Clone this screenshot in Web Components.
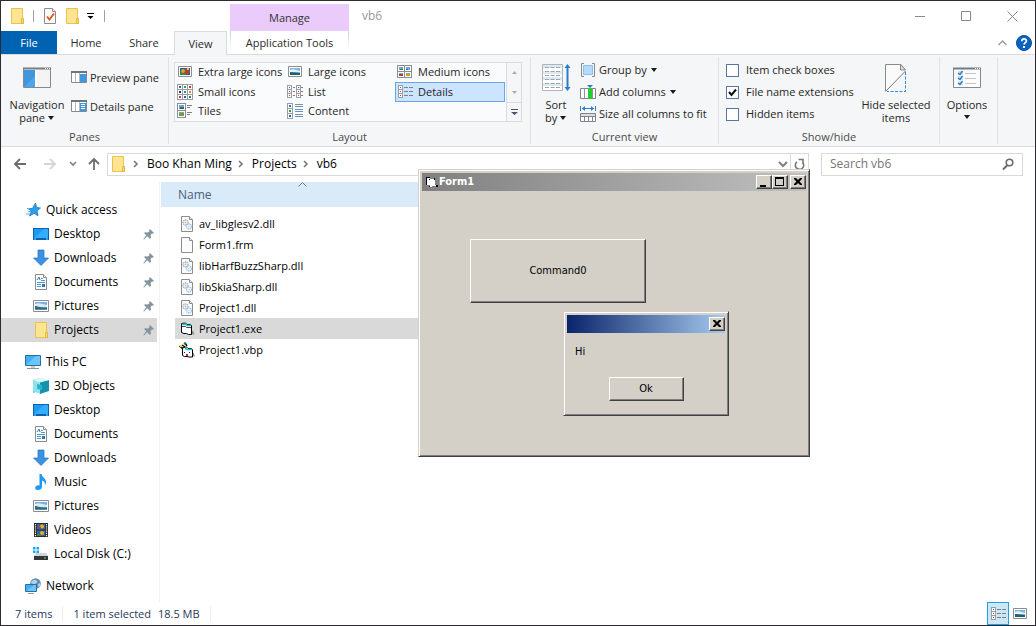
<!DOCTYPE html>
<html lang="en">
<head>
<meta charset="utf-8">
<title>vb6</title>
<style>
  html, body { margin: 0; }
  body { font: 12px/16px "Open Sans", "Noto Sans", sans-serif; color: #000; background: #fff; }
</style>
</head>
<body>
<explorer-window></explorer-window>
<classic-window class="form"></classic-window>

<script>
/* ---------- helpers ---------- */
const RESET = `
  *, *::before, *::after { box-sizing: border-box; }
  button, input { font: inherit; color: inherit; margin: 0; padding: 0; border: 0; background: none; border-radius: 0; }
  a { color: inherit; text-decoration: none; }
  ul, ol { margin: 0; padding: 0; list-style: none; }
`;
function component(name, markup, setup) {
  const template = document.createElement('template');
  template.innerHTML = markup;
  customElements.define(name, class extends HTMLElement {
    connectedCallback() {
      if (this.shadowRoot) return;
      const root = this.attachShadow({ mode: 'open' });
      const copy = template.content.cloneNode(true);
      if (setup) setup(this, copy);
      const style = document.createElement('style');
      style.textContent = RESET;
      root.append(style, copy);
    }
  });
}

/* ---------- icons: [width, height, svg body] ---------- */
const picture = (x, y, w, h) => `<rect x="${x}" y="${y}" width="${w}" height="${h}" fill="#8a8d91"/><rect x="${x+1}" y="${y+1}" width="${w-2}" height="${h-2}" fill="#fff"/><rect x="${x+2}" y="${y+2}" width="${w-4}" height="${h-4}" fill="#6fa6d8"/>`;
const folder = `<path d="M2.5.5h11v10l1 1v4h-12z" fill="#ffe591" stroke="#e9c24f"/><path d="M12.5 15.5v-5h2v5z" fill="#ffdf7c" stroke="#e3b63b"/>`;
const sheet = `<path d="M2.5.5h8l3 3v12h-11z" fill="#fbfbfb" stroke="#8c8c8c"/><path d="M10.5.5v3h3" fill="#eee" stroke="#8c8c8c"/>`;
const desktop = `<rect y="2" width="16" height="12" fill="#0b63ad"/><rect x="1" y="3" width="14" height="9" fill="#1c9bf5"/><path d="M1 12L11 3h4v9z" fill="#35adff"/><path d="M1 13h2M13 13h2" stroke="#8fd0ff"/>`;
const cell = (x, y, c) => `<rect x="${x}" y="${y}" width="6" height="6" fill="#9a9da1"/><rect x="${x+1}" y="${y+1}" width="4" height="4" fill="#fff"/><rect x="${x+2}" y="${y+2}" width="2" height="2" fill="${c}"/>`;
const tiny = (x, y, c) => `<rect x="${x}" y="${y}" width="5" height="5" fill="#9a9da1"/><rect x="${x+1}" y="${y+1}" width="3" height="3" fill="#fff"/><rect x="${x+2}" y="${y+2}" width="1" height="1" fill="${c}"/>`;
const pane = () => `<path d="M.5 1.5h15v10H.5z" fill="#fff" stroke="#85898e"/><path d="M0 1h16" stroke="#6f7479" stroke-width="2"/><path d="M4.5 2v9M8.5 2v9" stroke="#b6b9bc"/>`;
const gear = `<g fill="none"><circle cx="6.500" cy="6.500" r="2.500" stroke="#a3abb3" stroke-width="1.300" stroke-dasharray="1.3 .5"/><circle cx="6.500" cy="6.500" r="1" fill="#b4bfc9"/><circle cx="10" cy="10.500" r="2.500" stroke="#9cc2e0" stroke-width="1.300" stroke-dasharray="1.3 .5"/><circle cx="10" cy="10.500" r="1" fill="#c3ddf0"/></g>`;
const listCells = `${tiny(0,0,'#2f6fc0')}${tiny(0,4,'#c33')}${tiny(0,8,'#c33')}`;
const detailsRows = `<g transform="translate(1 1)">${listCells}</g><path d="M7 3.500h4M12 3.500h4M7 7.500h4M12 7.500h4M7 11.500h4M12 11.500h4" stroke="#7b8187"/>`;
const photo = `<path d="M.5 2.500h15v11H.5z" fill="#fff" stroke="#8a8d91"/><path d="M2 4h12v8H2z" fill="#79b2e2"/><path d="M2 6c4-2 7 0 12 1v2H2z" fill="#dbeaf6"/><path d="M2 8c3 0 4 2 12 1.500V12H2z" fill="#2f6b6e"/><path d="M2 11h12v1H2z" fill="#5a8fb0"/>`;
const ICONS = {
  folder: [16, 16, folder],
  docCheck: [16, 16, sheet + `<path d="M5 8.500l2.500 3L12 5.500" fill="none" stroke="#e2541a" stroke-width="1.800"/>`],
  qatMenu: [10, 8, `<path d="M1 1.500h7" stroke="#000"/><path d="M1.500 4h6L4.500 7z"/>`],
  arrow: [7, 4, `<path d="M0 0h6L3 4z" fill="#1b1b1b"/>`],
  minimize: [11, 11, `<path d="M0 5.500h10" stroke="#888"/>`],
  maximize: [11, 11, `<path d="M.5.5h9v9h-9z" fill="none" stroke="#888"/>`],
  close: [11, 11, `<path d="M.5.5l10 10M10.500.5l-10 10" stroke="#888"/>`],
  collapse: [9, 6, `<path d="M.5 5l4-4 4 4" fill="none" stroke="#9a9a9a" stroke-width="1.400"/>`],
  help: [16, 16, `<circle cx="8" cy="8" r="7.500" fill="#0a63c2" stroke="#0b4f9c"/><path d="M5.800 6.200c0-3.200 4.600-3 4.600-.3 0 1.700-2.300 1.800-2.300 3.600" fill="none" stroke="#fff" stroke-width="1.700"/><rect x="7" y="11" width="2" height="2" fill="#fff"/>`],
  navPane: [28, 28, `<path d="M.5 4.500h27v19H.5z" fill="#fff" stroke="#85898e"/><path d="M14 5h13v18H14z" fill="#f4f4f4"/><path d="M0 4.500h28" stroke="#777c81" stroke-width="2"/><path d="M22 4.500h1M24 4.500h1M26 4.500h1" stroke="#fff"/><path d="M1 6h11v17H1z" fill="#3f97e0"/><path d="M1 23L12 12v11z" fill="#4ea5ec"/>`],
  previewPane: [16, 13, pane() + `<path d="M9 3h6v8H9z" fill="#3f97e0"/>`],
  detailsPane: [16, 13, pane() + `<path d="M9 3h6v8H9z" fill="#3f97e0"/><path d="M10 4.500h4M10 6.500h4M10 8.500h4" stroke="#fff"/>`],
  xlIcons: [16, 16, `<path d="M1.500 2.500h13v10h-13z" fill="#fff" stroke="#8a8d91"/><path d="M3 4h10v7H3z" fill="#2a5aa8"/><circle cx="6" cy="7" r="2" fill="#e3a51b"/><path d="M8 5h4v5H8z" fill="#c63a1e"/><path d="M10 4h2v2h-2z" fill="#f2c52c"/><path d="M3 9h6v2H3z" fill="#3d8a35"/>`],
  lIcons: [16, 16, `<path d="M1.500 2.500h13v10h-13z" fill="#fff" stroke="#8a8d91"/><path d="M3 4h10v7H3z" fill="#7fb8e8"/><path d="M3 6c3-2 6 0 10 1v1H3z" fill="#e7f2fb"/><path d="M3 8l10 1v2H3z" fill="#27606a"/>`],
  mIcons: [16, 16, picture(0,1,8,7) + picture(7,1,8,7) + picture(0,7,8,7) + picture(7,7,8,7) + `<path d="M2 10h4v2H2z" fill="#c23b20"/><path d="M9 10h4v2H9z" fill="#d0a21c"/><path d="M3 5h3v1H3zM9 5h2v1H9z" fill="#2d7d46"/>`],
  sIcons: [16, 16, cell(0,0,'#26a')+cell(5,0,'#2a4')+cell(10,0,'#c33')+cell(0,5,'#333')+cell(5,5,'#28c')+cell(10,5,'#e80')+cell(0,10,'#c33')+cell(5,10,'#26a')+cell(10,10,'#285')],
  list: [16, 16, `<g transform="translate(0 1)">${listCells}</g><g transform="translate(9 1)">${listCells}</g><path d="M6 3.500h2M6 7.500h2M6 11.500h2M14 3.500h2M14 7.500h2M14 11.500h2" stroke="#7b8187"/>`],
  details: [16, 16, detailsRows],
  tiles: [16, 16, picture(0,0,9,8) + picture(0,7,9,8) + `<path d="M2 10h5v3H2z" fill="#7d9a3b"/><path d="M3 4h4v2H3z" fill="#2d6d56"/><path d="M10 2.500h5M10 4.500h3M10 9.500h5M10 11.500h3" stroke="#7b8187"/>`],
  content: [16, 16, cell(0,0,'#2f6fc0')+cell(0,5,'#2f9a3c')+cell(0,10,'#26a')+`<path d="M8 1.500h8M8 6.500h8M8 11.500h8" stroke="#8b9096"/><path d="M8 3.500h8M8 8.500h8M8 13.500h8" stroke="#5b90dc"/>`],
  up: [5, 3, `<path d="M0 3h5L2.500 0z" fill="#a9aeb5"/>`],
  down: [5, 3, `<path d="M0 0h5L2.500 3z" fill="#a9aeb5"/>`],
  more: [7, 6, `<path d="M0 .5h7" stroke="#44546a"/><path d="M0 3h7L3.500 6z" fill="#44546a"/>`],
  sort: [28, 28, `<path d="M.5.5h20v26H.5z" fill="#fff" stroke="#b0b3b6"/><path d="M1 1h19v3H1zM1 7h19v3H1zM1 13h19v3H1zM1 19h19v3H1z" fill="#d9eaf5"/><path d="M3 3.500h15M3 7.500h15M3 11.500h15M3 15.500h15M3 19.500h15M3 23.500h15" stroke="#a0a4a7" stroke-dasharray="4 1.500"/><path d="M25.500 3v21" stroke="#2b7cc9" stroke-width="2"/><path d="M22.500 4L25.500 0l3 4zM22.500 23l3 4 3-4z" fill="#2b7cc9"/>`],
  group: [16, 16, `<path d="M4 1.500H1.500v13H4M12 1.500h2.500v13H12" fill="none" stroke="#85898e"/><path d="M3.500 3.500h9v9h-9z" fill="#b4dcfa" stroke="#8abfec"/>`],
  addCol: [16, 16, `<path d="M.5 4.500h15v10H.5z" fill="#fff" stroke="#7f8488"/><path d="M4.500 4v10M12.500 4v10" stroke="#8f9396"/><path d="M8 4h4v11H8z" fill="#23cf2a"/><path d="M7 1h6l-3 3z" fill="#2b7cc9"/>`],
  sizeCols: [16, 16, `<path d="M.5 0v5M15.500 0v5M2 2.500h12" stroke="#2b7cc9"/><path d="M5 0L2 2.500 5 5zM11 0l3 2.500L11 5z" fill="#2b7cc9"/><path d="M.5 7.500h15v8H.5z" fill="#fff" stroke="#7f8488"/><path d="M1 8h14v2H1z" fill="#ddd"/><path d="M0 10.500h16M4.500 11v5M8.500 11v5M12.500 11v5" stroke="#7f8488"/>`],
  hide: [22, 28, `<path d="M1 27V.5h15L20.500 6z" fill="#fafafa"/><path d="M.5 27.500V.5h15.500l4.500 5.500" fill="none" stroke="#8b8b8b"/><path d="M15.500.5V6h5z" fill="#ddd" stroke="#8b8b8b"/><path d="M1 27L20.500 7" stroke="#777"/><path d="M20.500 8v19.500H2" fill="none" stroke="#2f8ad8" stroke-dasharray="3 1.500"/>`],
  options: [28, 28, `<path d="M.5 4.500h27v19H.5z" fill="#fcfcfc" stroke="#85898e"/><path d="M0 4.500h28" stroke="#777c81" stroke-width="2"/><path d="M22 4.500h1M24 4.500h1M26 4.500h1" stroke="#fff"/><path d="M5 7h5v4H5zM5 12h5v4H5zM5 17h5v4H5z" fill="#cfe2f4"/><path d="M5 9l2 1.500L9.500 7M5 14l2 1.500 2.500-3.500M5 19l2 1.500 2.500-3.500" fill="none" stroke="#2b7cc9" stroke-width="1.300"/><path d="M12 9.500h11M12 14.500h11M12 19.500h11" stroke="#c3c6c9"/>`],
  back: [14, 12, `<path d="M6 1L1 6l5 5M1 6h11" fill="none" stroke="#6d6d6d" stroke-width="1.800"/>`],
  forward: [14, 12, `<path d="M6 1l5 5-5 5M11 6H0" fill="none" stroke="#d5d5d5" stroke-width="1.800"/>`],
  recent: [8, 6, `<path d="M1 1l3 3 3-3" fill="none" stroke="#808080" stroke-width="1.600"/>`],
  parent: [12, 14, `<path d="M1 7l5-5 5 5M6 2v11" fill="none" stroke="#6d6d6d" stroke-width="1.800"/>`],
  crumb: [5, 8, `<path d="M1 1l3 3-3 3" fill="none" stroke="#777" stroke-width="1.600"/>`],
  chevron: [10, 7, `<path d="M1 1l4 4 4-4" fill="none" stroke="#808080" stroke-width="2"/>`],
  refresh: [11, 13, `<path d="M3 3.800A4.200 4.200 0 1 0 8.500 4.200M4.500 1.500h4.500V6" fill="none" stroke="#777" stroke-width="1.600"/>`],
  search: [12, 12, `<circle cx="7.500" cy="4.500" r="3.300" fill="none" stroke="#6a6a6a" stroke-width="1.600"/><path d="M5.500 7L1 11.500" stroke="#6a6a6a" stroke-width="2"/>`],
  sortUp: [9, 5, `<path d="M.5 4.500l4-4 4 4" fill="none" stroke="#6b7a86"/>`],
  star: [16, 16, `<path d="M10.500 1l1 4.500 4 .5-3.500 2.800 1 5-3.800-2.500L4.500 14l2-5L3 6.500h4.500z" fill="#2d9ff0" stroke="#1a74bd" stroke-width=".8"/><path d="M2 6.500h3M3 9.500h3M1 12h4" stroke="#55b4f3"/>`],
  desktop: [16, 16, desktop],
  download: [16, 16, `<path d="M5 0h6v8h4.500L8 15.500.5 8H5z" fill="#3a93e0" stroke="#2472bd" stroke-width=".7"/>`],
  document: [16, 16, sheet + `<path d="M4 6l2-3 1 3" fill="none" stroke="#2b7cc9"/><path d="M8 4.500h2M8 6.500h4M4 8.500h8M4 10.500h4M4 12.500h4" stroke="#4d9be0"/><path d="M9 10h3v3H9z" fill="#3c6f9a"/>`],
  picture: [16, 16, photo],
  pc: [16, 16, `<path d="M.5 1.500h15v10H.5z" fill="#3fb0f5" stroke="#2b6e9e"/><path d="M1 11L11 2h4v9z" fill="#6cc6fa"/><path d="M6 12h4v2H6z" fill="#c9ced2"/><path d="M2 14.500h12" stroke="#7c97aa"/>`],
  cube: [16, 16, `<path d="M0 2l7-2v13l-7 2z" fill="#5fd0de"/><path d="M0 2l7 2v12l-7-3z" fill="#8fe3ec"/><path d="M16 2L7 4v12l9-3z" fill="#1593ad"/><path d="M7 0l9 2-9 2.500L0 2z" fill="#d6f6fa"/><path d="M4 6l5 1v5l-5-1z" fill="#2db6ca"/>`],
  music: [16, 16, `<path d="M8.500 0c.5 3.500 4.500 4 4.500 8 0 1.500-.6 2.500-1.200 3C12.300 8 10.500 6.800 9 6.500V13c0 2-2 3-4 3s-3-1-2.800-2.300C2.500 11.500 5 11 6.500 11.500V0z" fill="#1a9af2"/>`],
  video: [16, 16, `<path d="M1 1h14v14H1z" fill="#2b2b2b"/><path d="M2.500 2v13M13.500 2v13" stroke="#fff" stroke-width="1.200" stroke-dasharray="1.200 1"/><path d="M4 2h8v5.500H4zM4 8.500h8V14H4z" fill="#2c66b5"/><circle cx="9" cy="4.500" r="2" fill="#e8b11c"/><circle cx="6.500" cy="5.500" r="1.300" fill="#c6401f"/><circle cx="9" cy="11" r="2" fill="#e8b11c"/><path d="M4 12h4v2H4z" fill="#3d8a35"/>`],
  disk: [16, 16, `<path d="M0 1h2.500v2.500H0zM3.500 1H6v2.500H3.500zM0 4.500h2.500V7H0zM3.500 4.500H6V7H3.500z" fill="#16a5ee"/><path d="M3 7h10l2 3H1z" fill="#d3d5d7"/><path d="M1 10h14v4H1z" fill="#33373a"/><path d="M11 12h2" stroke="#4ae04a"/>`],
  network: [16, 16, `<circle cx="10.500" cy="5.500" r="5.300" fill="#5f8fae"/><path d="M7 3c2-2 4-1 5 0s-1 3-3 3-4-1-2-3z" fill="#b5d0e2"/><path d="M13 6l2-1v3l-2 1z" fill="#b5d0e2"/><path d="M.5 6.500h11v7H.5z" fill="#3fb0f5" stroke="#2b6e9e"/><path d="M1 13l8-6h2v6z" fill="#6cc6fa"/><path d="M3 15.500h6" stroke="#8aa2b3"/>`],
  pin: [12, 12, `<path d="M7 0l4 4-1.200.8-.8-.3-1.500 1.500.5 2.500-1 1.500-2.800-2.800L1 10.500.3 10 3.300 6.300 1 4l1.200-.8 2.800.3L6.500 2 6.200 1z" fill="#8495a0" transform="translate(1 1)"/>`],
  dll: [16, 16, sheet + gear],
  file: [16, 16, sheet],
  exe: [16, 16, `<path d="M10 13l5.500.5-1.500-4z" fill="#888"/><path d="M2.500 2.500l4-.5 1.500 1.500h3.500l1 1v9H9.500l-2-1H5l-2.500-1z" fill="#fff" stroke="#000"/><path d="M3 3.500h4l1 1h4" fill="none" stroke="#1cc8d4" stroke-width="1.600"/><path d="M2.500 5.500h4l1 1h5" fill="none" stroke="#000" stroke-width=".7"/>`],
  vbp: [16, 16, `<path d="M11 14l5 .5-1.500-4z" fill="#888"/><path d="M3.500 5.500l4-.5L9 6.500h3.500l1 1V15H10l-2-.5H5.500l-2-1z" fill="#fff" stroke="#000"/><path d="M6 6.500l2 1h5" fill="none" stroke="#1cc8d4" stroke-width="1.600"/><path d="M.5 4l3.500 3M6 1l2 3M3 3l3 2" stroke="#000" stroke-width="1.500"/><circle cx="2" cy="4" r="1.200" fill="#f1d927"/><circle cx="6" cy="1.500" r="1.300" fill="#1d7f2d"/><path d="M5 10h1v1H5zM10 10h1v1h-1z" fill="#222"/><path d="M7 12h2v2H7z" fill="#c22"/>`],
  form: [13, 12, `<path d="M1 1h4v1H1zM1 1h1v8H1zM4 10h3v1H4zM9 2h1v2H9zM11 9h2v2h-2z" fill="#000"/><path d="M2 2h3v1h4v1h1v5h1v1H7v1H5V9H2z" fill="#fff"/><path d="M4 3h1v1H4z" fill="#000"/>`],
  cMin: [12, 10, `<path d="M2 8h6v2H2z"/>`],
  cMax: [12, 10, `<path d="M1 0h9v9H1zM2 2v6h7V2z" fill-rule="evenodd"/>`],
  cClose: [12, 10, `<path d="M2 1h2l2 2 2-2h2v1L7.500 4.500 10 7v1H8L6 6 4 8H2V7l2.500-2.500L2 2z"/>`],
};
component('ui-icon', `<style>
  :host { display: inline-flex; flex: none; }
  svg { display: block; overflow: visible; }
</style>`, (host, copy) => {
  const [w, h, body] = ICONS[host.getAttribute('name')];
  const box = document.createElement('template');
  box.innerHTML = `<svg width="${w}" height="${h}" viewBox="0 0 ${w} ${h}" aria-hidden="true">${body}</svg>`;
  copy.append(box.content);
});

const setIcon = (host, copy) => copy.querySelector('ui-icon').setAttribute('name', host.getAttribute('icon'));

/* ---------- title bar and tabs ---------- */
component('title-bar', `<style>
  :host { display: flex; height: 30px; align-items: center; }
  .quick { display: flex; align-items: center; gap: 6px; width: 229px; padding-left: 8px; flex: none; }
  .quick button { display: flex; }
  .sep { width: 1px; height: 12px; margin: 0 2px; background: #a0a0a0; }
  .context { align-self: flex-end; width: 119px; height: 27px; background: #eacbfb; color: #333; text-align: center; font-size: 11px; line-height: 28px; }
  .title { margin-left: 13px; flex: 1; color: #999; }
  .caption { display: flex; align-self: stretch; }
  .caption button { width: 46px; display: flex; align-items: center; justify-content: center; }
</style>
<div class="quick">
  <button aria-label="Window menu"><ui-icon name="folder"></ui-icon></button><span class="sep"></span>
  <button aria-label="Properties"><ui-icon name="docCheck"></ui-icon></button>
  <button aria-label="New folder"><ui-icon name="folder"></ui-icon></button>
  <button aria-label="Customize"><ui-icon name="qatMenu"></ui-icon></button><span class="sep"></span>
</div>
<div class="context">Manage</div>
<div class="title">vb6</div>
<div class="caption">
  <button aria-label="Minimize"><ui-icon name="minimize"></ui-icon></button>
  <button aria-label="Maximize"><ui-icon name="maximize"></ui-icon></button>
  <button aria-label="Close"><ui-icon name="close"></ui-icon></button>
</div>`);

component('ribbon-tabs', `<style>
  :host { display: flex; height: 24px; box-shadow: inset 0 -1px #dadbdc; color: #2b2b2b; font-size: 11px; }
  button { height: 23px; width: 58px; flex: none; }
  .file { width: 56px; background: #0063b1; color: #fff; }
  .active { width: 53px; height: 24px; margin-left: 1px; background: #f5f6f7; border: 1px solid #dadbdc; border-bottom: 0; }
  .context { width: 119px; height: 18px; margin: 0 auto 0 3px; line-height: 23px; border: solid; border-width: 0 1px; border-image: linear-gradient(#ccc, #fff) 1; }
  .tool { width: 22px; display: flex; align-items: center; justify-content: center; }
</style>
<button class="file">File</button><button>Home</button><button>Share</button><button class="active">View</button>
<button class="context">Application Tools</button>
<button class="tool" aria-label="Minimize the Ribbon"><ui-icon name="collapse"></ui-icon></button>
<button class="tool" aria-label="Help"><ui-icon name="help"></ui-icon></button>`);

/* ---------- ribbon ---------- */
component('ribbon-group', `<style>
  :host { display: flex; flex: none; flex-direction: column; margin: 2px 0; border-right: 1px solid #e1e2e4; box-sizing: border-box; }
  .items { display: flex; flex: 1; align-items: flex-start; }
  .name { text-align: center; line-height: 14px; color: #4a4a4a; min-height: 14px; }
</style><div class="items"><slot></slot></div><div class="name"></div>`,
(host, copy) => { copy.querySelector('.name').textContent = host.getAttribute('name') || ''; });

component('big-button', `<style>
  :host { display: block; flex: none; }
  button { width: 100%; padding-top: 7px; line-height: 13px; text-align: center; }
  ui-icon { display: flex; justify-content: center; margin-bottom: 6px; }
</style><button><ui-icon></ui-icon><slot></slot></button>`, setIcon);

component('small-button', `<style>
  :host { display: block; }
  button { display: flex; align-items: center; gap: 3px; height: 100%; white-space: nowrap; }
  .arrow { margin-left: 1px; }
</style><button><ui-icon></ui-icon><slot></slot></button>`, (host, copy) => {
  setIcon(host, copy);
  if (host.hasAttribute('menu')) {
    const arrow = document.createElement('ui-icon');
    arrow.setAttribute('name', 'arrow'); arrow.className = 'arrow';
    copy.querySelector('button').append(arrow);
  }
});

component('view-option', `<style>
  :host { display: block; height: 20px; }
  button { display: flex; align-items: center; gap: 5px; width: 100%; height: 100%; padding-left: 1px; white-space: nowrap; border: 1px solid transparent; }
  :host([selected]) button { background: #cce4ff; border-color: #67a7e8; }
</style><button><ui-icon></ui-icon><slot></slot></button>`, setIcon);

component('view-gallery', `<style>
  :host { display: flex; height: 60px; background: #fafbfd; border: 1px solid #dadbdc; box-sizing: border-box; }
  .options { display: grid; grid-template-columns: repeat(3, 110px); grid-template-rows: 19px 20px 19px; align-items: end; }
  .scroll { display: grid; grid-template-rows: 19px 20px 19px; width: 15px; margin-left: 1px; border-left: 1px solid #dadbdc; }
  .scroll button { display: flex; align-items: center; justify-content: center; background: #f5f6f7; }
  .scroll button:last-child { border-top: 1px solid #dadbdc; }
</style>
<div class="options">
  <view-option icon="xlIcons">Extra large icons</view-option><view-option icon="lIcons">Large icons</view-option><view-option icon="mIcons">Medium icons</view-option>
  <view-option icon="sIcons">Small icons</view-option><view-option icon="list">List</view-option><view-option icon="details" selected>Details</view-option>
  <view-option icon="tiles">Tiles</view-option><view-option icon="content">Content</view-option>
</div>
<div class="scroll">
  <button aria-label="Row up"><ui-icon name="up"></ui-icon></button>
  <button aria-label="Row down"><ui-icon name="down"></ui-icon></button>
  <button aria-label="More"><ui-icon name="more"></ui-icon></button>
</div>`);

component('ribbon-check', `<style>
  :host { display: block; }
  label { display: flex; align-items: center; gap: 7px; height: 100%; white-space: nowrap; }
  input { appearance: none; width: 13px; height: 13px; border: 1px solid #5a76a0; background: #fff; }
  input:checked { background: #fff url("data:image/svg+xml,%3Csvg xmlns='http://www.w3.org/2000/svg' viewBox='0 0 11 11'%3E%3Cpath d='M2 5l2.500 3L9 2.500' fill='none' stroke='%23111' stroke-width='2'/%3E%3C/svg%3E") center / 11px no-repeat; }
</style><label><input type="checkbox"><slot></slot></label>`, (host, copy) => {
  copy.querySelector('input').checked = host.hasAttribute('checked');
});

component('ribbon-bar', `<style>
  :host { display: flex; height: 92px; background: #f5f6f7; border-bottom: 1px solid #dadbdc; box-sizing: border-box; color: #262626; font-size: 11px; overflow: hidden; }
  .panes { width: 168px; } .layout { width: 362px; } .current { width: 188px; } .show { width: 221px; } .opts { width: 58px; }
  .nav { width: 64px; margin-left: 4px; }
  .sort { width: 42px; margin-left: 4px; }
  .hide { width: 78px; margin-left: auto; margin-right: 4px; }
  .opts big-button { width: 54px; }
  .stack { display: grid; }
  .panes .stack { grid-auto-rows: 29px; padding-top: 6px; margin-left: 2px; }
  .tight { grid-auto-rows: 22px; padding-top: 2px; }
  .current .tight { margin-left: 3px; }
  .show .tight { margin-left: 7px; }
  view-gallery { margin: 5px 0 0 5px; }
  .below { display: flex; justify-content: center; padding-top: 4px; }
  .inline { vertical-align: 2px; }
</style>
<ribbon-group class="panes" name="Panes">
  <big-button class="nav" icon="navPane">Navigation<br>pane <ui-icon class="inline" name="arrow"></ui-icon></big-button>
  <div class="stack"><small-button icon="previewPane">Preview pane</small-button><small-button icon="detailsPane">Details pane</small-button></div>
</ribbon-group>
<ribbon-group class="layout" name="Layout"><view-gallery></view-gallery></ribbon-group>
<ribbon-group class="current" name="Current view">
  <big-button class="sort" icon="sort">Sort<br>by <ui-icon class="inline" name="arrow"></ui-icon></big-button>
  <div class="stack tight">
    <small-button icon="group" menu>Group by</small-button>
    <small-button icon="addCol" menu>Add columns</small-button>
    <small-button icon="sizeCols">Size all columns to fit</small-button>
  </div>
</ribbon-group>
<ribbon-group class="show" name="Show/hide">
  <div class="stack tight">
    <ribbon-check>Item check boxes</ribbon-check>
    <ribbon-check checked>File name extensions</ribbon-check>
    <ribbon-check>Hidden items</ribbon-check>
  </div>
  <big-button class="hide" icon="hide">Hide selected<br>items</big-button>
</ribbon-group>
<ribbon-group class="opts">
  <big-button icon="options">Options<span class="below"><ui-icon name="arrow"></ui-icon></span></big-button>
</ribbon-group>`);

/* ---------- address row ---------- */
component('address-row', `<style>
  :host { display: flex; align-items: center; height: 35px; padding: 0 12px 1px 13px; }
  button { display: flex; }
  .go { display: flex; align-items: center; width: 93px; }
  .go button { margin-right: 16px; } .go button:nth-child(2) { margin-right: 11px; } .go button:nth-child(3) { margin-right: 11px; } .go button:last-child { margin-right: 0; }
  .box { display: flex; align-items: center; height: 23px; border: 1px solid #d9d9d9; background: #fff; min-width: 0; }
  .path { flex: 1; }
  ol { display: flex; flex: 1; align-items: center; margin-left: 7px; }
  li { display: flex; align-items: center; white-space: nowrap; }
  li a { margin: 0 6px 0 9px; }
  .drop { padding: 0 2px; }
  .refresh { align-items: center; justify-content: center; width: 18px; height: 100%; border-left: 1px solid #d9d9d9; }
  .search { width: 202px; margin-left: 12px; padding: 0 8px; }
  input { flex: 1; min-width: 0; outline: 0; }
  input::placeholder { color: #767676; opacity: 1; }
  .box > ui-icon:first-child { margin-left: 2px; }
</style>
<div class="go">
  <button aria-label="Back"><ui-icon name="back"></ui-icon></button>
  <button aria-label="Forward"><ui-icon name="forward"></ui-icon></button>
  <button aria-label="Recent locations"><ui-icon name="recent"></ui-icon></button>
  <button aria-label="Up"><ui-icon name="parent"></ui-icon></button>
</div>
<nav class="box path" aria-label="Address">
  <ui-icon name="folder"></ui-icon>
  <ol>
    <li><ui-icon name="crumb"></ui-icon><a href="#home">Boo Khan Ming</a></li>
    <li><ui-icon name="crumb"></ui-icon><a href="#projects">Projects</a></li>
    <li><ui-icon name="crumb"></ui-icon><a href="#vb6">vb6</a></li>
  </ol>
  <button class="drop" aria-label="Previous locations"><ui-icon name="chevron"></ui-icon></button>
  <button class="refresh" aria-label="Refresh"><ui-icon name="refresh"></ui-icon></button>
</nav>
<div class="box search"><input type="search" aria-label="Search vb6" placeholder="Search vb6"><ui-icon name="search"></ui-icon></div>`);

/* ---------- navigation tree ---------- */
component('nav-item', `<style>
  :host { display: block; }
  a { display: flex; align-items: center; gap: 5px; height: 24px; margin-right: 2px; padding: 0 3px 0 32px; white-space: nowrap; }
  :host([root]) a { padding-left: 24px; }
  :host([selected]) a { background: #d9d9d9; }
  .text { flex: 1; }
</style><a href="#"><ui-icon></ui-icon><span class="text"><slot></slot></span></a>`, (host, copy) => {
  setIcon(host, copy);
  if (host.hasAttribute('pinned')) {
    const pin = document.createElement('ui-icon');
    pin.setAttribute('name', 'pin');
    copy.querySelector('a').append(pin);
  }
});
component('nav-tree', `<style>
  :host { display: flex; flex-direction: column; gap: 8px; flex: none; width: 159px; padding: 16px 0 4px; border-right: 1px solid #f3f3f3; box-sizing: border-box; }
</style>
<section><nav-item root icon="star">Quick access</nav-item><nav-item pinned icon="desktop">Desktop</nav-item><nav-item pinned icon="download">Downloads</nav-item><nav-item pinned icon="document">Documents</nav-item><nav-item pinned icon="picture">Pictures</nav-item><nav-item pinned selected icon="folder">Projects</nav-item></section>
<section><nav-item root icon="pc">This PC</nav-item><nav-item icon="cube">3D Objects</nav-item><nav-item icon="desktop">Desktop</nav-item><nav-item icon="document">Documents</nav-item><nav-item icon="download">Downloads</nav-item><nav-item icon="music">Music</nav-item><nav-item icon="picture">Pictures</nav-item><nav-item icon="video">Videos</nav-item><nav-item icon="disk">Local Disk (C:)</nav-item></section>
<section><nav-item root icon="network">Network</nav-item></section>`);

/* ---------- file list ---------- */
component('file-list', `<style>
  :host { display: block; flex: 1; margin-left: 1px; }
  table { width: 283px; border-spacing: 0; }
  th { height: 25px; padding: 0; background: #d9ebf9; color: #4c607a; font-weight: 400; text-align: left; }
  .head { display: grid; grid-template: 5px 20px / 1fr; padding-left: 17px; }
  .head ui-icon { justify-self: center; margin-right: 17px; }
  .head button { text-align: left; line-height: 16px; align-self: start; }
  td { padding: 0 0 0 14px; font-size: 11px; }
  tbody::before { content: ""; display: block; height: 6px; }
  .file { display: flex; align-items: center; gap: 4px; height: 21px; padding-left: 4px; }
  .selected { background: #d9d9d9; }
</style>
<table><thead><tr><th><div class="head"><ui-icon name="sortUp"></ui-icon><button>Name</button></div></th></tr></thead><tbody>
<tr><td><div class="file"><ui-icon name="dll"></ui-icon>av_libglesv2.dll</div></td></tr>
<tr><td><div class="file"><ui-icon name="file"></ui-icon>Form1.frm</div></td></tr>
<tr><td><div class="file"><ui-icon name="dll"></ui-icon>libHarfBuzzSharp.dll</div></td></tr>
<tr><td><div class="file"><ui-icon name="dll"></ui-icon>libSkiaSharp.dll</div></td></tr>
<tr><td><div class="file"><ui-icon name="dll"></ui-icon>Project1.dll</div></td></tr>
<tr><td><div class="file selected"><ui-icon name="exe"></ui-icon>Project1.exe</div></td></tr>
<tr><td><div class="file"><ui-icon name="vbp"></ui-icon>Project1.vbp</div></td></tr>
</tbody></table>`);

component('status-bar', `<style>
  :host { display: flex; height: 23px; align-items: center; padding: 0 4px 0 14px; color: #1e395b; font-size: 11px; }
  .count { padding-right: 10px; border-right: 1px solid #eee; }
  .picked { padding: 0 10px; border-right: 1px solid #eee; margin-right: auto; display: flex; gap: 7px; }
  button { width: 22px; height: 23px; display: flex; align-items: center; justify-content: center; }
  .on { background: #cce8f6; border: 1px solid #26a0da; }
</style>
<span class="count">7 items</span><span class="picked"><span>1 item selected</span><span>18.5 MB</span></span>
<button class="on" aria-label="Details view"><ui-icon name="details"></ui-icon></button>
<button aria-label="Large thumbnails view"><ui-icon name="lIcons"></ui-icon></button>`);

component('explorer-window', `<style>
  :host { display: flex; flex-direction: column; min-height: 100vh; box-sizing: border-box; border: 1px solid #2d2b31; background: #fff; }
  .body { display: flex; flex: 1; }
</style>
<title-bar></title-bar><ribbon-tabs></ribbon-tabs><ribbon-bar></ribbon-bar><address-row></address-row>
<div class="body"><nav-tree></nav-tree><file-list></file-list></div>
<status-bar></status-bar>`);

/* ---------- classic windows floating over the explorer ---------- */
const CLASSIC = `
  :host { box-sizing: border-box; position: absolute; padding: 2px; background: #d4d0c8; color: #000; font: 11px/14px "DejaVu Sans Condensed", "Liberation Sans", sans-serif; border: 1px solid; border-color: #d4d0c8 #404040 #404040 #d4d0c8; box-shadow: inset 1px 1px #fff, inset -1px -1px #808080; }
  button { background: #d4d0c8; border: 1px solid; border-color: #fff #404040 #404040 #fff; box-shadow: inset -1px -1px #808080; }
  header { display: flex; align-items: center; height: 18px; margin: 1px; }
  header button { display: flex; width: 16px; height: 14px; padding: 1px; }
`;
component('message-window', `<style>${CLASSIC}
  :host { left: 144px; top: 141px; width: 166px; height: 105px; }
  header { justify-content: flex-end; background: linear-gradient(90deg, #0a246a, #a6caf0); }
  p { margin: 12px 9px 18px; }
  .ok { display: block; width: 75px; height: 24px; margin: 0 auto; }
</style>
<header><button aria-label="Close"><ui-icon name="cClose"></ui-icon></button></header>
<p>Hi</p><button class="ok">Ok</button>`);
component('classic-window', `<style>${CLASSIC}
  :host { left: 418px; top: 169px; width: 392px; height: 288px; }
  header { color: #fff; font-weight: 700; background: linear-gradient(90deg, #808080, #c0c0c0); }
  header > ui-icon { margin: 0 1px 0 3px; }
  header span { flex: 1; }
  header button:last-child { margin-left: 2px; }
  .command { position: absolute; left: 51px; top: 69px; width: 176px; height: 64px; }
</style>
<header><ui-icon name="form"></ui-icon><span>Form1</span>
  <button aria-label="Minimize"><ui-icon name="cMin"></ui-icon></button><button aria-label="Maximize"><ui-icon name="cMax"></ui-icon></button><button aria-label="Close"><ui-icon name="cClose"></ui-icon></button>
</header>
<button class="command">Command0</button>
<message-window></message-window>`);
</script>
</body>
</html>
